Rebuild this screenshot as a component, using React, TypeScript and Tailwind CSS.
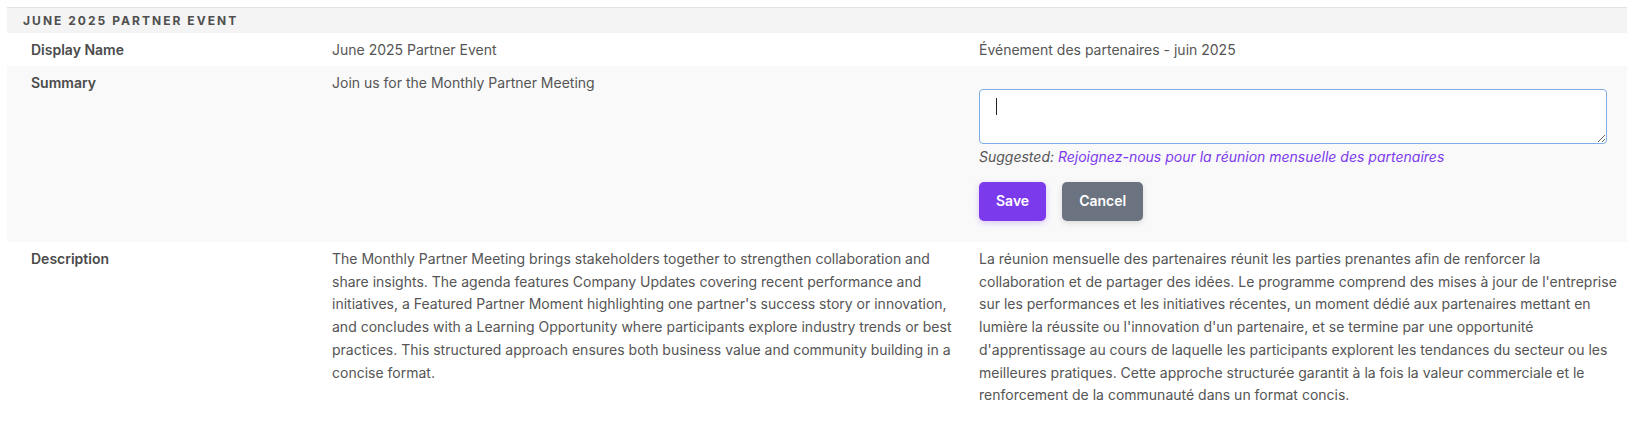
import React from "react";

const font = { fontFamily: "Inter, 'Noto Sans', sans-serif" };

export default function App() {
  return (
    <div className="bg-white w-[1636px] h-[427px] overflow-hidden pt-[7px] pl-[7px]" style={font}>
      <div className="w-[1620px] border-t border-[#e3e3e3]">
        <div className="bg-[#f4f4f4] h-[25px] pl-[16px] flex items-center">
          <span className="text-[12px] font-bold tracking-[0.17em] text-[#4f4f4f] uppercase">June 2025 Partner Event</span>
        </div>

        {/* Display Name */}
        <div className="flex bg-white text-[14px] leading-[22.75px]">
          <div className="w-[301px] pl-[24px] pt-[6px] pb-[4px] font-semibold text-[#4a4a4a]">Display Name</div>
          <div className="w-[647px] pl-[24px] pt-[6px] pb-[4px] text-[#555]">June 2025 Partner Event</div>
          <div className="flex-1 pl-[24px] pt-[6px] pb-[4px] text-[#555]">Événement des partenaires - juin 2025</div>
        </div>

        {/* Summary */}
        <div className="flex bg-[#f9f9f9] text-[14px] leading-[22.75px]">
          <div className="w-[301px] pl-[24px] py-[6px] font-semibold text-[#4a4a4a]">Summary</div>
          <div className="w-[647px] pl-[24px] py-[6px] text-[#555]">Join us for the Monthly Partner Meeting</div>
          <div className="flex-1 pl-[24px] pt-[23px] pb-[21px]">
            <div className="relative w-[628px]">
              <textarea
                className="block w-[628px] h-[55px] bg-white border border-[#7eaee6] rounded-[4px] outline-none px-[16px] py-[8px] text-[14px] text-[#333]"
                defaultValue=""
              />
              <span className="absolute left-[17px] top-[9px] w-[1px] h-[17px] bg-[#222]" />
            </div>
            <div className="mt-[3px] text-[14px] leading-[20px] italic">
              <span className="text-[#555]">Suggested: </span>
              <span className="text-[#7c3aed]">Rejoignez-nous pour la réunion mensuelle des partenaires</span>
            </div>
            <div className="flex gap-[16px] mt-[15px]">
              <button className="bg-[#7c3aed] text-white text-[14px] font-semibold h-[39px] px-[17px] rounded-[5px] shadow-[0_2px_6px_rgba(124,58,237,0.25)]">Save</button>
              <button className="bg-[#6b7280] text-white text-[14px] font-semibold h-[39px] px-[17px] rounded-[5px] shadow-[0_2px_6px_rgba(0,0,0,0.12)]">Cancel</button>
            </div>
          </div>
        </div>

        {/* Description */}
        <div className="flex bg-white text-[14px] leading-[22.75px]">
          <div className="w-[301px] pl-[24px] pt-[6px] pb-[5px] font-semibold text-[#4a4a4a]">Description</div>
          <div className="w-[647px] pl-[24px] pr-[2px] pt-[6px] pb-[5px] text-[#555]">
            The Monthly Partner Meeting brings stakeholders together to strengthen collaboration and share insights. The agenda features Company Updates covering recent performance and initiatives, a Featured Partner Moment highlighting one partner's success story or innovation, and concludes with a Learning Opportunity where participants explore industry trends or best practices. This structured approach ensures both business value and community building in a concise format.
          </div>
          <div className="flex-1 pl-[24px] pr-[4px] pt-[6px] pb-[5px] text-[#555]">
            La réunion mensuelle des partenaires réunit les parties prenantes afin de renforcer la collaboration et de partager des idées. Le programme comprend des mises à jour de l'entreprise sur les performances et les initiatives récentes, un moment dédié aux partenaires mettant en lumière la réussite ou l'innovation d'un partenaire, et se termine par une opportunité d'apprentissage au cours de laquelle les participants explorent les tendances du secteur ou les meilleures pratiques. Cette approche structurée garantit à la fois la valeur commerciale et le renforcement de la communauté dans un format concis.
          </div>
        </div>
      </div>
    </div>
  );
}
